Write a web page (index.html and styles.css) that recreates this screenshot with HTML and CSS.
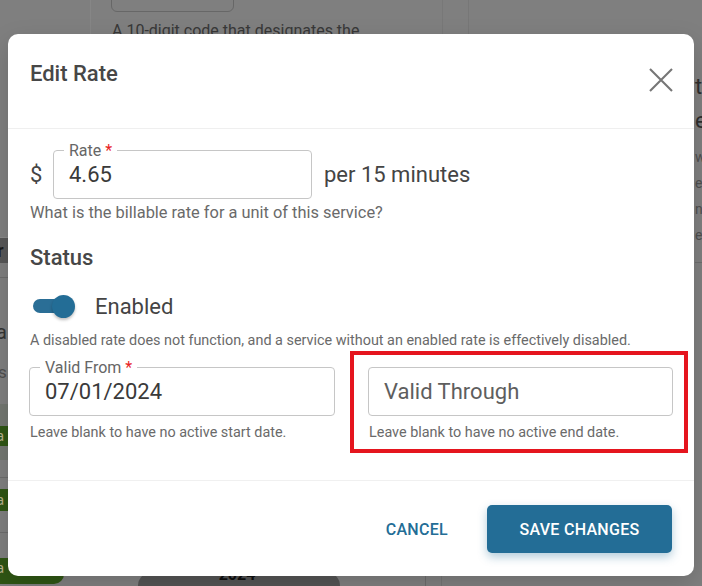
FILE: index.html
```html
<!DOCTYPE html>
<html lang="en">
<head>
<meta charset="utf-8">
<title>Edit Rate</title>
<link rel="stylesheet" href="styles.css">
</head>
<body>
<div class="backdrop" aria-hidden="true">
  <div class="bg-input"></div>
  <p class="bg-text">A 10-digit code that designates the</p>
  <div class="bg-vline bg-vline-a"></div>
  <div class="bg-vline bg-vline-b"></div>
  <div class="bg-vline bg-vline-c"></div>
  <div class="bg-vline bg-vline-d"></div>
  <div class="bg-vline bg-vline-e"></div>
  <div class="bg-right">
    <div class="bg-right-big">t</div>
    <div class="bg-right-big bg-right-e">e</div>
    <div class="bg-right-small bg-right-first">w</div>
    <div class="bg-right-small">e</div>
    <div class="bg-right-small">n</div>
    <div class="bg-right-small">e</div>
    <div class="bg-right-rule"></div>
  </div>
  <div class="bg-left-tab">r</div>
  <div class="bg-hline bg-hline-1"></div>
  <div class="bg-left-a">a</div>
  <div class="bg-left-s">s</div>
  <div class="bg-gray-block"></div>
  <div class="bg-chip bg-chip-1">a</div>
  <div class="bg-hline bg-hline-2"></div>
  <div class="bg-chip bg-chip-2">a</div>
  <div class="bg-hline bg-hline-3"></div>
  <div class="bg-chip bg-chip-3">a</div>
  <div class="bg-pill">2024</div>
</div>

<div class="modal" role="dialog" aria-labelledby="dlg-title">
  <header class="modal-header">
    <h2 class="modal-title" id="dlg-title">Edit Rate</h2>
    <button class="close-btn" aria-label="Close">
      <svg width="24" height="24" viewBox="0 0 24 24" aria-hidden="true">
        <path d="M1 1 L23 23 M23 1 L1 23" stroke="#767676" stroke-width="2.1" fill="none"/>
      </svg>
    </button>
  </header>

  <div class="modal-body">
    <div class="rate-row">
      <span class="currency">$</span>
      <div class="field rate-field">
        <span class="field-label">Rate <span class="req">*</span></span>
        <span class="field-value">4.65</span>
      </div>
      <span class="unit">per 15 minutes</span>
    </div>
    <p class="helper helper-rate">What is the billable rate for a unit of this service?</p>

    <h3 class="section-title">Status</h3>
    <div class="toggle-row">
      <span class="switch">
        <span class="switch-track"></span>
        <span class="switch-thumb"></span>
      </span>
      <span class="toggle-label">Enabled</span>
    </div>
    <p class="helper helper-status">A disabled rate does not function, and a service without an enabled rate is effectively disabled.</p>

    <div class="date-grid">
      <div class="date-col">
        <div class="field">
          <span class="field-label">Valid From <span class="req">*</span></span>
          <span class="field-value">07/01/2024</span>
        </div>
        <p class="helper helper-date">Leave blank to have no active start date.</p>
      </div>
      <div class="date-col">
        <div class="field">
          <span class="field-placeholder">Valid Through</span>
        </div>
        <p class="helper helper-date">Leave blank to have no active end date.</p>
      </div>
    </div>
  </div>

  <footer class="modal-footer">
    <button class="btn-text">Cancel</button>
    <button class="btn-primary">Save Changes</button>
  </footer>
</div>

<div class="annotation" aria-hidden="true"></div>
</body>
</html>
```

FILE: styles.css
```css
* { box-sizing: border-box; }

html, body {
  margin: 0;
  padding: 0;
}

body {
  position: relative;
  width: 702px;
  height: 586px;
  overflow: hidden;
  background: #7f7f7f;
  font-family: Roboto, "Noto Sans", "Liberation Sans", sans-serif;
}

/* ---------- dimmed page behind the dialog ---------- */
.backdrop {
  position: absolute;
  inset: 0;
  overflow: hidden;
  background: #7f7f7f;
}

.bg-input {
  position: absolute;
  left: 111px;
  top: -12px;
  width: 123px;
  height: 24px;
  border: 1px solid #676767;
  border-radius: 6px;
}

.bg-text {
  position: absolute;
  left: 112px;
  top: 21px;
  margin: 0;
  font-size: 16px;
  line-height: 19px;
  color: #383838;
  white-space: nowrap;
}

.bg-vline {
  position: absolute;
  width: 1px;
}
.bg-vline-a { left: 90px; top: 0; height: 40px; background: #868686; }
.bg-vline-b { left: 442px; top: 0; height: 40px; background: #787878; }
.bg-vline-c { left: 468px; top: 0; height: 40px; background: #777777; }
.bg-vline-d { left: 425px; top: 570px; height: 20px; background: #6c6c6c; }
.bg-vline-e { left: 441px; top: 570px; height: 20px; background: #747474; }

.bg-right {
  position: absolute;
  left: 695px;
  top: 74px;
  width: 10px;
}
.bg-right-big {
  font-size: 22px;
  line-height: 26px;
  color: #2e2e2e;
}
.bg-right-e { margin-top: 8px; }
.bg-right-small {
  font-size: 14px;
  line-height: 26px;
  color: #4e4e4e;
}
.bg-right-first { margin-top: 10px; }
.bg-right-rule {
  margin-top: 14px;
  height: 1px;
  background: #6d6d6d;
}

.bg-left-tab {
  position: absolute;
  left: 0;
  top: 237px;
  width: 10px;
  height: 26px;
  background: #575757;
  color: #1c1c1c;
  font-size: 18px;
  font-weight: 700;
  line-height: 26px;
  text-indent: -3px;
  overflow: hidden;
  border-top: 1px solid #8a8a8a;
}

.bg-hline {
  position: absolute;
  left: 0;
  width: 10px;
  height: 1px;
  background: #6d6d6d;
}
.bg-hline-1 { top: 277px; }
.bg-hline-2 { top: 477px; }
.bg-hline-3 { top: 532px; }

.bg-left-a {
  position: absolute;
  left: -4px;
  top: 320px;
  font-size: 20px;
  line-height: 24px;
  color: #333333;
}
.bg-left-s {
  position: absolute;
  left: -2px;
  top: 362px;
  font-size: 17px;
  line-height: 20px;
  color: #505050;
}

.bg-gray-block {
  position: absolute;
  left: 0;
  top: 404px;
  width: 10px;
  height: 56px;
  background: #737771;
}

.bg-chip {
  position: absolute;
  left: 0;
  width: 10px;
  height: 20px;
  background: #2f5614;
  color: #b5b08a;
  font-size: 15px;
  line-height: 20px;
  text-indent: -4px;
  overflow: hidden;
}
.bg-chip-1 { top: 426px; }
.bg-chip-2 { top: 489px; height: 22px; line-height: 22px; }
.bg-chip-3 {
  top: 558px;
  width: 64px;
  height: 26px;
  line-height: 20px;
  border-radius: 0 0 10px 0;
}

.bg-pill {
  position: absolute;
  left: 138px;
  top: 572px;
  width: 202px;
  height: 30px;
  border-radius: 14px;
  background: #545454;
  color: #101010;
  font-size: 16px;
  font-weight: 700;
  text-align: center;
  padding-right: 4px;
  line-height: 6px;
}

/* ---------- dialog ---------- */
.modal {
  position: absolute;
  left: 8px;
  top: 34px;
  width: 686px;
  height: 542px;
  background: #ffffff;
  border-radius: 10px;
  display: flex;
  flex-direction: column;
  overflow: hidden;
  box-shadow: 0 8px 24px rgba(0, 0, 0, 0.15);
}

.modal-header {
  height: 95px;
  flex: none;
  display: flex;
  justify-content: space-between;
  align-items: flex-start;
  padding: 27px 21px 0 22px;
  border-bottom: 1px solid #efefef;
}

.modal-title {
  margin: 0;
  font-size: 22px;
  line-height: 26px;
  font-weight: 500;
  color: #474747;
}

.close-btn {
  margin-top: 7px;
  width: 24px;
  height: 24px;
  padding: 0;
  border: 0;
  background: none;
  display: block;
}
.close-btn svg { display: block; }

.modal-body {
  flex: 1;
  padding: 21px 22px 0 22px;
}

.rate-row {
  display: flex;
  align-items: center;
  height: 49px;
}

.currency {
  font-size: 22px;
  color: #444444;
  width: 23px;
}

.field {
  position: relative;
  height: 49px;
  border: 1px solid #c6c6c6;
  border-radius: 4px;
  display: flex;
  align-items: center;
  padding-left: 15px;
}

.rate-field {
  width: 259px;
}

.field-label {
  position: absolute;
  left: 10px;
  top: -10px;
  padding: 0 5px;
  background: #ffffff;
  font-size: 16px;
  line-height: 19px;
  color: #666666;
  white-space: nowrap;
}

.req {
  color: #e8231f;
}

.field-value {
  font-size: 22px;
  color: #3a3a3a;
}

.field-placeholder {
  font-size: 22px;
  color: #5e5e5e;
}

.unit {
  margin-left: 12px;
  font-size: 22px;
  color: #444444;
}

.helper {
  margin: 0;
  font-size: 14.4px;
  line-height: 20px;
  color: #6a6a6a;
  white-space: nowrap;
}

.helper-rate {
  margin-top: 3px;
  font-size: 16.4px;
  line-height: 22px;
}

.section-title {
  margin: 21px 0 0 0;
  font-size: 22px;
  line-height: 26px;
  font-weight: 500;
  color: #474747;
}

.toggle-row {
  margin-top: 17px;
  height: 36px;
  display: flex;
  align-items: center;
  padding-left: 3px;
}

.switch {
  display: flex;
  align-items: center;
}

.switch-track {
  width: 34px;
  height: 14px;
  border-radius: 7px;
  background: #2a6e96;
}

.switch-thumb {
  width: 23px;
  height: 23px;
  border-radius: 50%;
  margin-left: -15px;
  background: #236d96;
  box-shadow: 0 2px 3px rgba(0, 0, 0, 0.25);
}

.toggle-label {
  margin-left: 20px;
  font-size: 22px;
  color: #444444;
}

.helper-status { margin-top: 7px; }

.date-grid {
  margin-top: 16px;
  display: grid;
  grid-template-columns: 305px 304px;
  column-gap: 34px;
}

.date-col .field {
  margin-left: -1px;
}

.helper-date { margin-top: 7px; }

.modal-footer {
  height: 96px;
  flex: none;
  border-top: 1px solid #f0f0f0;
  display: flex;
  justify-content: flex-end;
  align-items: center;
  padding-right: 22px;
  gap: 23px;
}

.btn-text,
.btn-primary {
  font-family: Roboto, "Noto Sans", "Liberation Sans", sans-serif;
  font-size: 16px;
  font-weight: 500;
  letter-spacing: 0.3px;
  text-transform: uppercase;
  border: 0;
  cursor: pointer;
  padding-top: 3px;
}

.btn-text {
  height: 48px;
  padding-left: 16px;
  padding-right: 16px;
  background: none;
  color: #236d96;
}

.btn-primary {
  height: 48px;
  width: 185px;
  border-radius: 5px;
  background: #236d96;
  color: #ffffff;
  box-shadow: 0 4px 10px rgba(35, 109, 150, 0.35);
}

/* ---------- red review annotation on top ---------- */
.annotation {
  position: absolute;
  left: 350px;
  top: 351px;
  width: 338px;
  height: 102px;
  border: 4px solid #e5151e;
}
```
